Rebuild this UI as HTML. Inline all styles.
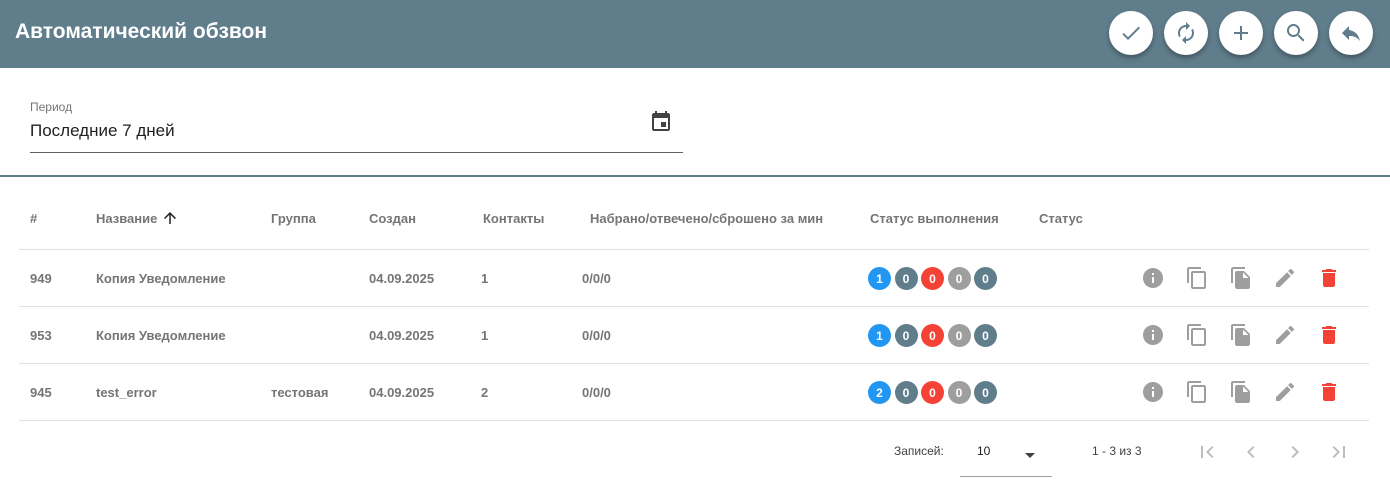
<!DOCTYPE html>
<html><head><meta charset="utf-8"><style>
*{box-sizing:border-box;margin:0;padding:0}
body{width:1390px;height:481px;background:#fff;font-family:"Liberation Sans",Arial,sans-serif;position:relative;overflow:hidden;color:#616161}
.hdr{position:absolute;left:0;top:0;width:1390px;height:68px;background:#607d8b}
.hdr h1{position:absolute;left:15px;top:20px;font-size:21px;font-weight:bold;color:#fff}
.fab{position:absolute;top:11px;width:44px;height:44px;border-radius:50%;background:#fff;box-shadow:0 3px 5px rgba(0,0,0,.3);display:flex;align-items:center;justify-content:center}
.fab svg{width:24px;height:24px;fill:#607d8b}
.a{position:absolute;white-space:nowrap}
.th{font-size:13px;font-weight:bold;color:#757575;top:211px}
.td{font-size:13px;font-weight:bold;color:#757575}
.line{position:absolute;left:19px;width:1350px;height:1px;background:#e0e0e0}
.b{position:absolute;width:23px;height:23px;border-radius:50%;color:#fff;font-size:12px;font-weight:bold;display:flex;align-items:center;justify-content:center}
.ic{position:absolute;width:24px;height:24px}
</style></head><body>
<div class="hdr"><h1>Автоматический обзвон</h1>
<div class="fab" style="left:1109px"><svg viewBox="0 0 24 24"><path d="M9 16.2L4.8 12l-1.4 1.4L9 19 21 7l-1.4-1.4z"/></svg></div>
<div class="fab" style="left:1164px"><svg viewBox="0 0 24 24"><path d="M12 6v3l4-4-4-4v3c-4.4 0-8 3.6-8 8 0 1.6.5 3 1.2 4.3L6.7 14.8c-.5-.8-.7-1.8-.7-2.8 0-3.3 2.7-6 6-6zm6.8 1.7L17.3 9.2c.4.8.7 1.8.7 2.8 0 3.3-2.7 6-6 6v-3l-4 4 4 4v-3c4.4 0 8-3.6 8-8 0-1.6-.5-3-1.2-4.3z"/></svg></div>
<div class="fab" style="left:1219px"><svg viewBox="0 0 24 24"><path d="M19 13h-6v6h-2v-6H5v-2h6V5h2v6h6v2z"/></svg></div>
<div class="fab" style="left:1274px"><svg viewBox="0 0 24 24"><path d="M15.5 14h-.8l-.3-.3c1-1.1 1.6-2.6 1.6-4.2C16 5.9 13.1 3 9.5 3S3 5.9 3 9.5 5.9 16 9.5 16c1.6 0 3.1-.6 4.2-1.6l.3.3v.8l5 5 1.5-1.5-5-5zm-6 0C7 14 5 12 5 9.5S7 5 9.5 5 14 7 14 9.5 12 14 9.5 14z"/></svg></div>
<div class="fab" style="left:1329px"><svg viewBox="0 0 24 24"><path d="M10 9V5l-7 7 7 7v-4.1c5 0 8.5 1.6 11 5.1-1-5-4-10-11-11z"/></svg></div>
</div>
<div class="a" style="left:30px;top:100px;font-size:12px;color:#757575">Период</div>
<div class="a" style="left:30px;top:121px;font-size:17px;color:#212121">Последние 7 дней</div>
<svg class="ic" style="left:649px;top:110px" viewBox="0 0 24 24" fill="#424242"><path d="M17 12h-5v5h5v-5zM16 1v2H8V1H6v2H5c-1.1 0-2 .9-2 2v14c0 1.1.9 2 2 2h14c1.1 0 2-.9 2-2V5c0-1.1-.9-2-2-2h-1V1h-2zm3 18H5V8h14v11z"/></svg>
<div style="position:absolute;left:30px;top:152px;width:653px;height:1px;background:#616161"></div>
<div style="position:absolute;left:0;top:175px;width:1390px;height:2px;background:#607d8b"></div>
<div class="a th" style="left:30px">#</div>
<div class="a th" style="left:96px">Название</div>
<svg style="position:absolute;left:161px;top:209px;width:18px;height:18px" viewBox="0 0 24 24" fill="#212121"><path d="M4 12l1.41 1.41L11 7.83V20h2V7.83l5.58 5.59L20 12l-8-8-8 8z"/></svg>
<div class="a th" style="left:271px">Группа</div>
<div class="a th" style="left:369px">Создан</div>
<div class="a th" style="left:483px">Контакты</div>
<div class="a th" style="left:590px">Набрано/отвечено/сброшено за мин</div>
<div class="a th" style="left:870px">Статус выполнения</div>
<div class="a th" style="left:1039px">Статус</div>
<div class="line" style="top:249px"></div>
<div class="line" style="top:306px"></div>
<div class="line" style="top:363px"></div>
<div class="line" style="top:420px"></div>
<div id="rows"></div>
<script>
var rows=[[271,'949','Копия Уведомление','','1','1'],[328,'953','Копия Уведомление','','1','1'],[385,'945','test_error','тестовая','2','2']];
var h='';rows.forEach(function(r){var t=r[0];
h+='<div class="a td" style="left:30px;top:'+t+'px">'+r[1]+'</div><div class="a td" style="left:96px;top:'+t+'px">'+r[2]+'</div><div class="a td" style="left:271px;top:'+t+'px">'+r[3]+'</div><div class="a td" style="left:369px;top:'+t+'px">04.09.2025</div><div class="a td" style="left:481px;top:'+t+'px">'+r[4]+'</div><div class="a td" style="left:582px;top:'+t+'px">0/0/0</div>';
var c=['#2196f3','#607d8b','#f44336','#9e9e9e','#607d8b'],v=[r[5],'0','0','0','0'];
for(var i=0;i<5;i++)h+='<div class="b" style="left:'+(868+i*26.5)+'px;top:'+(t-4)+'px;background:'+c[i]+'">'+v[i]+'</div>';
var y=t-5;
h+='<svg class="ic" style="left:1141px;top:'+y+'px" viewBox="0 0 24 24" fill="#9e9e9e"><path d="M12 2C6.5 2 2 6.5 2 12s4.5 10 10 10 10-4.5 10-10S17.5 2 12 2zm1 15h-2v-6h2v6zm0-8h-2V7h2v2z"/></svg>';
h+='<svg class="ic" style="left:1185px;top:'+y+'px" viewBox="0 0 24 24" fill="#9e9e9e"><path d="M16 1H4c-1.1 0-2 .9-2 2v14h2V3h12V1zm3 4H8c-1.1 0-2 .9-2 2v14c0 1.1.9 2 2 2h11c1.1 0 2-.9 2-2V7c0-1.1-.9-2-2-2zm0 16H8V7h11v14z"/></svg>';
h+='<svg class="ic" style="left:1229px;top:'+y+'px" viewBox="0 0 24 24" fill="#9e9e9e"><path d="M16 1H4c-1.1 0-2 .9-2 2v14h2V3h12V1zm-1 4l6 6v10c0 1.1-.9 2-2 2H8c-1.1 0-2-.9-2-2V7c0-1.1.9-2 2-2h7zm-1 7h5.5L14 6.5V12z"/></svg>';
h+='<svg class="ic" style="left:1273px;top:'+y+'px" viewBox="0 0 24 24" fill="#9e9e9e"><path d="M3 17.25V21h3.75L17.8 9.94l-3.75-3.75L3 17.25zM20.7 7.04c.4-.4.4-1 0-1.41l-2.34-2.34c-.4-.4-1-.4-1.41 0l-1.830 1.83 3.75 3.75 1.83-1.83z"/></svg>';
h+='<svg class="ic" style="left:1317px;top:'+y+'px" viewBox="0 0 24 24" fill="#f44336"><path d="M6 19c0 1.1.9 2 2 2h8c1.1 0 2-.9 2-2V7H6v12zM19 4h-3.5l-1-1h-5l-1 1H5v2h14V4z"/></svg>';
});document.getElementById('rows').innerHTML=h;
</script>
<div class="a" style="left:894px;top:444px;font-size:12px;color:#424242">Записей:</div>
<div class="a" style="left:977px;top:444px;font-size:12px;color:#212121">10</div>
<svg class="ic" style="left:1018px;top:443px" viewBox="0 0 24 24" fill="#424242"><path d="M7 10l5 5 5-5z"/></svg>
<div style="position:absolute;left:960px;top:476px;width:92px;height:1px;background:#9e9e9e"></div>
<div class="a" style="left:1092px;top:444px;font-size:12px;color:#424242">1 - 3 из 3</div>
<svg class="ic" style="left:1195px;top:440px" viewBox="0 0 24 24" fill="#bdbdbd"><path d="M18.4 16.6L13.8 12l4.6-4.6L17 6l-6 6 6 6zM6 6h2v12H6z"/></svg>
<svg class="ic" style="left:1239px;top:440px" viewBox="0 0 24 24" fill="#bdbdbd"><path d="M15.4 7.4L14 6l-6 6 6 6 1.4-1.4-4.6-4.6z"/></svg>
<svg class="ic" style="left:1283px;top:440px" viewBox="0 0 24 24" fill="#bdbdbd"><path d="M10 6L8.6 7.4l4.6 4.6-4.6 4.6L10 18l6-6z"/></svg>
<svg class="ic" style="left:1327px;top:440px" viewBox="0 0 24 24" fill="#bdbdbd"><path d="M5.6 7.4L10.2 12l-4.6 4.6L7 18l6-6-6-6zM16 6h2v12h-2z"/></svg>
</body></html>
